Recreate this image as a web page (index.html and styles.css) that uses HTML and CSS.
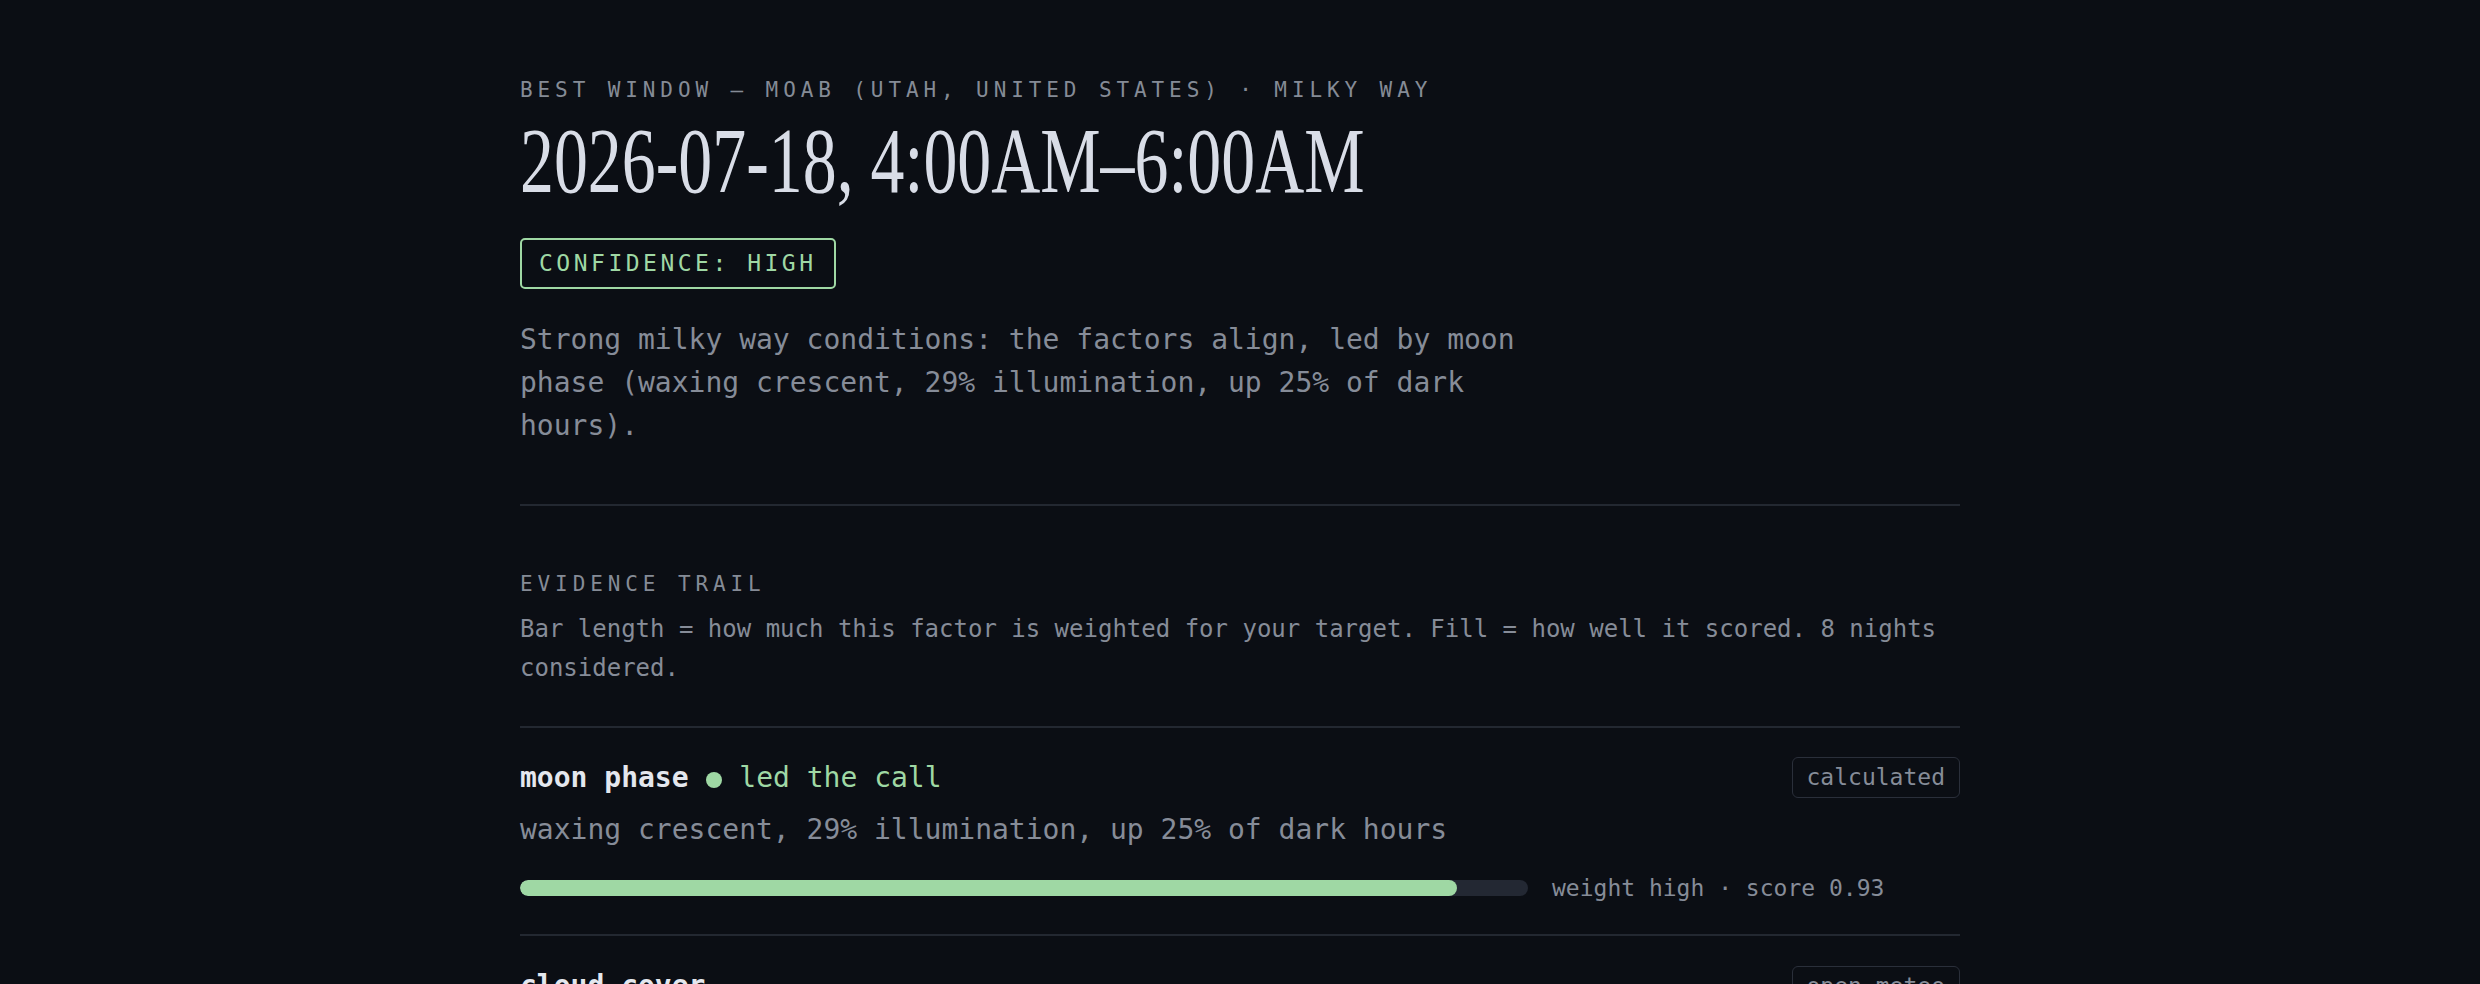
FILE: index.html
```html
<!DOCTYPE html>
<html lang="en">
<head>
<meta charset="utf-8">
<title>Best window — Moab</title>
<link rel="stylesheet" href="styles.css">
</head>
<body>
<main class="page">
  <header class="hero">
    <p class="eyebrow">Best window — Moab (Utah, United States) · Milky Way</p>
    <h1 class="title"><span class="title-text">2026-07-18, 4:00AM–6:00AM</span></h1>
    <div class="badge">Confidence: High</div>
    <p class="summary">Strong milky way conditions: the factors align, led by moon phase (waxing crescent, 29% illumination, up 25% of dark hours).</p>
  </header>

  <section class="evidence">
    <h2 class="eyebrow">Evidence trail</h2>
    <p class="note">Bar length = how much this factor is weighted for your target. Fill = how well it scored. 8 nights considered.</p>

    <ul class="factors">
      <li class="factor">
        <div class="factor-head">
          <div class="factor-name"><span class="name">moon phase</span> <span class="dot"></span> <span class="led">led the call</span></div>
          <span class="tag">calculated</span>
        </div>
        <p class="factor-desc">waxing crescent, 29% illumination, up 25% of dark hours</p>
        <div class="factor-bar">
          <div class="track"><div class="fill" style="width:93%"></div></div>
          <span class="meta">weight high · score 0.93</span>
        </div>
      </li>
      <li class="factor">
        <div class="factor-head">
          <div class="factor-name"><span class="name">cloud cover</span></div>
          <span class="tag">open-meteo</span>
        </div>
        <p class="factor-desc">4% average cloud cover across the window</p>
        <div class="factor-bar">
          <div class="track"><div class="fill" style="width:96%"></div></div>
          <span class="meta">weight high · score 0.96</span>
        </div>
      </li>
    </ul>
  </section>
</main>
</body>
</html>
```

FILE: styles.css
```css
* { box-sizing: border-box; }

html, body {
  margin: 0;
  padding: 0;
  background: #0b0e14;
}

body {
  font-family: "DejaVu Sans Mono", "Liberation Mono", monospace;
  color: #868c98;
}

.page {
  max-width: 1440px;
  margin: 0 auto;
  padding-top: 76px;
}

.eyebrow {
  margin: 0;
  font-size: 21px;
  line-height: 1.4;
  font-weight: normal;
  letter-spacing: 4.9px;
  text-transform: uppercase;
  color: #858b96;
}

.title {
  margin: 8px 0 0;
  font-family: "Liberation Serif", "DejaVu Serif", serif;
  font-weight: normal;
  font-size: 94px;
  line-height: 1;
  color: #d9dde7;
  white-space: nowrap;
}

.title-text {
  display: inline-block;
  transform: scaleX(0.722);
  transform-origin: left center;
}

.badge {
  display: inline-block;
  margin-top: 31px;
  padding: 7px 17px;
  border: 2px solid #9fd8a4;
  border-radius: 5px;
  font-size: 23px;
  line-height: 1.4;
  letter-spacing: 3.5px;
  text-transform: uppercase;
  color: #9fd8a4;
}

.summary {
  margin: 29px 0 0;
  max-width: 1040px;
  font-size: 28px;
  line-height: 43px;
  color: #868c98;
}

.hero {
  padding-bottom: 57px;
  border-bottom: 2px solid #232831;
}

.evidence {
  padding-top: 64px;
}

.note {
  margin: 11px 0 38px;
  font-size: 24px;
  line-height: 39px;
  color: #868c98;
}

.factors {
  list-style: none;
  margin: 0;
  padding: 0;
}

.factor {
  border-top: 2px solid #232831;
  padding: 29px 0 29px;
}

.factor-head {
  display: flex;
  justify-content: space-between;
  align-items: center;
}

.factor-name {
  font-size: 28px;
  line-height: 42px;
  white-space: pre;
}

.name {
  font-weight: bold;
  color: #e4e7ee;
}

.dot {
  display: inline-block;
  width: 16px;
  height: 16px;
  margin: 0 0.5px;
  border-radius: 50%;
  background: #9fd8a4;
  vertical-align: -1px;
}

.led {
  color: #9fd8a4;
}

.tag {
  display: inline-block;
  padding: 4px 14px;
  border: 1.5px solid #2a2f3a;
  border-radius: 6px;
  font-size: 23px;
  line-height: 31px;
  color: #868c98;
}

.factor-desc {
  margin: 10px 0 0;
  font-size: 28px;
  line-height: 42px;
  color: #868c98;
}

.factor-bar {
  display: flex;
  align-items: center;
  gap: 24px;
  margin-top: 20px;
}

.track {
  width: 70%;
  height: 16px;
  border-radius: 8px;
  background: #232833;
  overflow: hidden;
}

.fill {
  height: 100%;
  border-radius: 8px;
  background: #9fd8a4;
}

.meta {
  font-size: 23px;
  line-height: 34.5px;
  color: #868c98;
  white-space: nowrap;
}
```
